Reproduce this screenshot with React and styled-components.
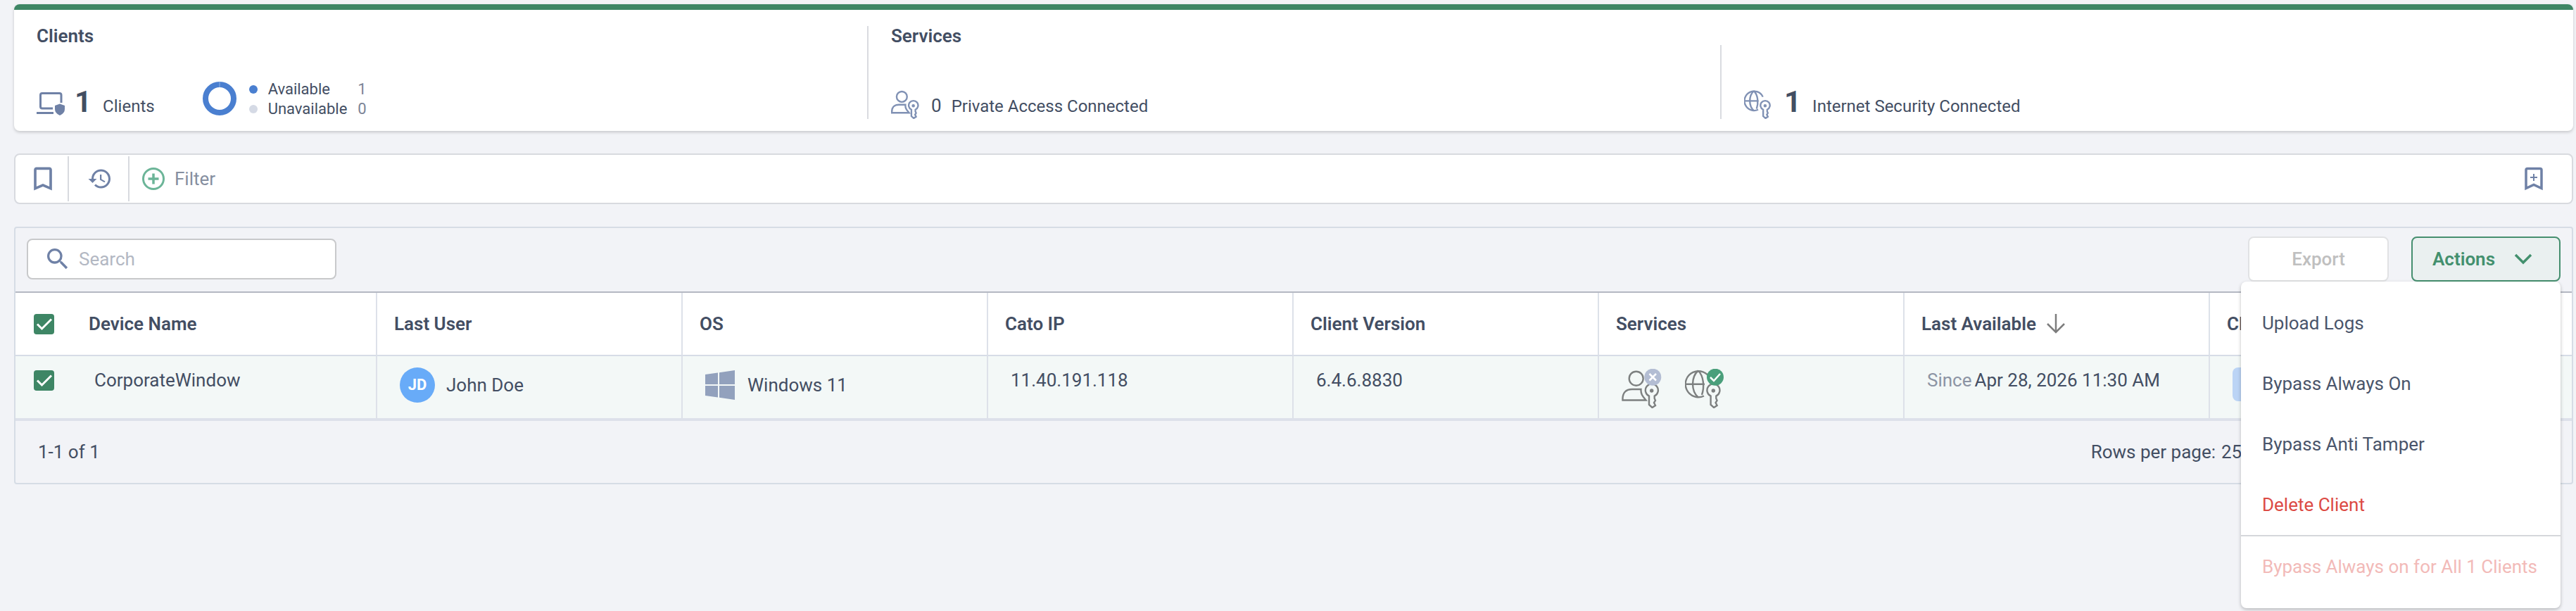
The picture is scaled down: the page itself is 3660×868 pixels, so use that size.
import React from "react"
import styled, { createGlobalStyle } from "styled-components"
import { MdBookmarkBorder, MdHistory, MdSearch } from "react-icons/md"

const GlobalStyle = createGlobalStyle`
	* {
		box-sizing: border-box;
	}

	body {
		margin: 0;
		background: #f2f3f7;
		color: #434e63;
		font-family: Roboto, "Liberation Sans", sans-serif;
		font-size: 26px;
		line-height: 32px;
	}

	button, input, select {
		font: inherit;
		color: inherit;
	}
`

const Page = styled.main`
	display: flex;
	flex-direction: column;
	gap: 32px;
	min-height: 100vh;
	padding: 6px 4px 4px 20px;
`

const Summary = styled.section`
	display: grid;
	grid-template-columns: repeat(3, 1fr);
	padding: 23px 0 17px;
	background: #fff;
	border-top: 8px solid #3e8665;
	border-radius: 8px;
	box-shadow: 0 2px 4px rgba(0, 0, 0, 0.18);
`

const SummaryColumn = styled.div`
	display: flex;
	flex-direction: column;
	justify-content: space-between;
	min-height: ${props => props.$short ? "105px" : "132px"};
	align-self: end;
	padding-left: 32px;
	border-left: ${props => props.$divided ? "2px solid #d9dbe0" : "none"};
`

const Title = styled.h2`
	margin: 0;
	font-size: 26px;
	font-weight: 600;
	line-height: 28px;
`

const StatRow = styled.div`
	display: flex;
	align-items: flex-end;
	margin-top: auto;

	svg {
		display: block;
		flex: none;
	}
`

const Figures = styled.div`
	margin-left: 14px;
	font-size: 42px;
	line-height: 48px;
	white-space: nowrap;

	span {
		line-height: 24px;
	}
`

const Count = styled.span`
	font-size: ${props => props.$big ? "42px" : "26px"};
	font-weight: ${props => props.$big ? 700 : 400};
`

const CountLabel = styled.span`
	margin-left: ${props => props.$wide ? "16px" : "14px"};
	font-size: 24px;
`

const Availability = styled.div`
	display: flex;
	align-items: flex-end;
	gap: 18px;
	margin-left: 68px;
`

const Legend = styled.dl`
	display: grid;
	grid-template-columns: 12px auto auto;
	column-gap: 15px;
	align-items: center;
	margin: 0;
	font-size: 22px;
	line-height: 28px;

	dd {
		margin: 0;
		color: #7b8496;
	}
`

const Dot = styled.span`
	width: 12px;
	height: 12px;
	border-radius: 50%;
	background: ${props => props.color};
`

const FilterBar = styled.div`
	display: flex;
	height: 72px;
	padding: 2px 0;
	background: #fff;
	border: 2px solid #d8dadf;
	border-radius: 8px;
`

const IconButton = styled.button`
	display: flex;
	align-items: center;
	justify-content: center;
	width: ${props => props.$width};
	padding: 0 0 0 4px;
	margin-left: ${props => props.$end ? "auto" : "0"};
	background: none;
	border: none;
	border-right: ${props => props.$end ? "none" : "2px solid #d8dadf"};
	color: #6f81a6;
`

const AddFilter = styled.button`
	display: flex;
	align-items: center;
	gap: 14px;
	padding: 0 18px;
	background: none;
	border: none;
	color: #868fa0;
`

const Panel = styled.section`
	border: 2px solid #d6dce5;
	border-radius: 4px;
`

const Toolbar = styled.div`
	display: flex;
	align-items: center;
	gap: 32px;
	height: 92px;
	padding: 0 16px 2px;
	border-bottom: 2px solid #b4b8c2;
`

const SearchBox = styled.label`
	display: flex;
	align-items: center;
	gap: 10px;
	width: 440px;
	height: 58px;
	margin-right: auto;
	padding: 0 22px;
	background: #fff;
	border: 2px solid #c8c9cb;
	border-radius: 8px;
	color: #6f81a6;

	input {
		flex: 1;
		min-width: 0;
		padding: 0;
		background: none;
		border: none;
		outline: none;
	}

	input::placeholder {
		color: #b3b8c3;
		opacity: 1;
	}
`

const ExportButton = styled.button`
	width: 200px;
	height: 64px;
	background: #fff;
	border: 2px solid #e1e2e4;
	border-radius: 8px;
	color: #bfbfbf;
	font-weight: 500;
`

const ActionsWrap = styled.div`
	position: relative;
`

const ActionsButton = styled.button`
	display: flex;
	align-items: center;
	justify-content: space-between;
	width: 212px;
	height: 64px;
	padding: 0 38px 0 28px;
	background: #eaf0f0;
	border: 2px solid #468f6f;
	border-radius: 8px;
	color: #43906e;
	font-weight: 600;
`

const Menu = styled.div`
	position: absolute;
	top: 100%;
	right: 0;
	z-index: 1;
	width: 454px;
	padding: 16px 0;
	background: #fff;
	border-radius: 8px;
	box-shadow: 0 2px 5px rgba(0, 0, 0, 0.25);
`

const MenuItem = styled.button`
	display: block;
	width: 100%;
	height: ${props => props.$separated ? "88px" : "86px"};
	padding: 0 30px;
	background: none;
	border: none;
	border-top: ${props => props.$separated ? "2px solid #d5d7db" : "none"};
	color: ${props => props.$color || "#4a556b"};
	text-align: left;
	white-space: nowrap;
`

const Table = styled.table`
	width: 100%;
	table-layout: fixed;
	border-collapse: separate;
	border-spacing: 0;

	.edge {
		width: 80px;
	}

	th, td {
		padding: 0 24px;
		border-right: 2px solid #dde1e9;
		text-align: left;
		white-space: nowrap;
	}

	th {
		height: 90px;
		background: #fff;
		border-bottom: 2px solid #d6dce6;
		font-weight: 600;
	}

	td {
		height: 92px;
		padding: 16px 32px 0;
		background: #f3f8f7;
		border-bottom: 4px solid #dde1ea;
		vertical-align: top;
	}

	th:first-child, td:first-child {
		padding-left: 26px;
		padding-right: 0;
	}

	th:first-child, td:first-child, th:last-child, td:last-child {
		border-right: none;
	}
`

const Checkbox = styled.input.attrs({ type: "checkbox" })`
	appearance: none;
	display: block;
	width: 29px;
	height: 29px;
	margin: ${props => props.$row ? "4px 0 0" : "0"};
	border: 2px solid #8b95a8;
	border-radius: 4px;

	&:checked {
		border: none;
		background: #3e8665 url("data:image/svg+xml,%3Csvg xmlns='http://www.w3.org/2000/svg' viewBox='0 0 29 29'%3E%3Cpath d='M5 14.500l6.500 6.500L25 7.500' fill='none' stroke='white' stroke-width='3'/%3E%3C/svg%3E");
	}
`

const CellText = styled.div`
	line-height: 36px;
`

const Muted = styled.span`
	margin-right: 4px;
	color: #8c94a4;
`

const CellGroup = styled.div`
	display: flex;
	align-items: center;
	gap: ${props => props.$gap || "16px"};
	height: ${props => props.$tall ? "60px" : "50px"};
`

const Avatar = styled.span`
	display: flex;
	align-items: center;
	justify-content: center;
	width: 50px;
	height: 50px;
	border-radius: 50%;
	background: #68abf8;
	color: #fff;
	font-size: 22px;
	font-weight: 700;
`

const Chip = styled.div`
	width: 160px;
	height: 48px;
	border-radius: 8px;
	background: #bbd4f5;
`

const SortLabel = styled.span`
	display: flex;
	align-items: center;
	gap: 14px;
`

const Footer = styled.div`
	display: flex;
	align-items: center;
	justify-content: space-between;
	height: 88px;
	padding: 0 398px 0 32px;
`

const RowsPerPage = styled.label`
	display: flex;
	align-items: center;
	gap: 8px;

	select {
		appearance: none;
		width: 100px;
		padding: 0;
		background: none;
		border: none;
	}
`

const Key = ({ dx = 0 }) => (
	<g transform={`translate(${dx} 0)`}>
		<path d="M41 38.500A9 9 0 1 1 48.700 38.500V42L50 45L48 48L50 52L45.500 55L41 51Z" />
		<circle cx="44.700" cy="31" r="1.500" fill="currentColor" />
	</g>
)

const CheckBadge = () => (
	<g stroke="none">
		<circle cx="45" cy="11.700" r="12" fill="#4a9f7b" />
		<path d="M38 12l5 5l9-10" stroke="#fff" strokeWidth="2.500" />
	</g>
)

const CrossBadge = () => (
	<g stroke="none">
		<circle cx="46.300" cy="11.700" r="12" fill="#b3bdd3" />
		<path d="M41.500 7l9.500 9.500M51 7l-9.500 9.500" stroke="#fff" strokeWidth="2.500" />
	</g>
)

const ServiceSvg = ({ small, children }) => (
	<svg
		width={small ? 43 : 58}
		height={small ? 42 : 56}
		viewBox="2 0 58 56"
		fill="none"
		stroke="currentColor"
		strokeWidth={small ? 3.2 : 2.4}
		color={small ? "#8091b4" : "#7d8080"}
		aria-hidden="true"
	>
		{children}
	</svg>
)

const PrivateAccessIcon = ({ small }) => (
	<ServiceSvg small={small}>
		<circle cx="22.700" cy="13.700" r="10" />
		<path d="M3.500 44.500C3 34 8 29 17 29H29.500C29 36 32 39 36.500 44.500Z" />
		<Key />
		{!small && <CrossBadge />}
	</ServiceSvg>
)

const InternetSecurityIcon = ({ small }) => (
	<ServiceSvg small={small}>
		<path d="M38 14A18.500 18.500 0 1 0 29 38.500" />
		<path d="M20.700 2.500C10.500 12 10.500 31 20.700 40.500M20.700 2.500C28.500 10 30 25 26 37M2 21.700H30" />
		<Key dx={-2.4} />
		{!small && <CheckBadge />}
	</ServiceSvg>
)

const LaptopIcon = () => (
	<svg width="40" height="40" viewBox="0 0 40 40" fill="none" stroke="#6f81a6" strokeWidth="3" aria-hidden="true">
		<path d="M35 17V6Q35 3.500 32.500 3.500H8Q5.500 3.500 5.500 6V22.500Q5.500 25 8 25H23M0 31.500H24" />
		<path d="M33 18.500l7 2.500v5q0 6-7 9q-7-3-7-9v-5z" fill="#6f81a6" stroke="none" />
	</svg>
)

const Donut = () => (
	<svg width="48" height="53" viewBox="0 0 48 53" fill="none" aria-hidden="true">
		<circle cx="24" cy="24" r="20" stroke="#4a7fd0" strokeWidth="8" />
		<path d="M24 0v8" stroke="#8fb1e4" strokeWidth="1" />
	</svg>
)

const PlusCircle = () => (
	<svg width="32" height="32" viewBox="0 0 32 32" fill="none" stroke="#6cb598" strokeWidth="3" aria-hidden="true">
		<circle cx="16" cy="16" r="14.500" />
		<path d="M16 8.500v15M8.500 16h15" strokeWidth="3.500" />
	</svg>
)

const BookmarkPlus = () => (
	<svg width="26" height="34" viewBox="0 0 26 34" fill="none" stroke="currentColor" strokeWidth="3.500" aria-hidden="true">
		<path d="M2 30.500V4.500Q2 2.500 4 2.500H22Q24 2.500 24 4.500V30.500L13 25.500Z" />
		<path d="M13 10v10M8 15h10" strokeWidth="2" />
	</svg>
)

const Chevron = () => (
	<svg width="26" height="16" viewBox="0 0 26 16" fill="none" stroke="currentColor" strokeWidth="3.500" aria-hidden="true">
		<path d="M2 2l11 11L24 2" />
	</svg>
)

const SortArrow = () => (
	<svg width="28" height="28" viewBox="0 0 28 28" fill="none" stroke="#7d7d7d" strokeWidth="2.500" aria-hidden="true">
		<path d="M14 0v25M2 14l12 12l12-12" />
	</svg>
)

const WindowsLogo = () => (
	<svg width="42" height="42" viewBox="0 0 42 42" fill="#92a1bd" aria-hidden="true">
		<path d="M0 6l18-2.500V20H0zM20 3.200L42 0v20H20zM0 22h18v16.500L0 36zM20 22h22v20l-22-3.200z" />
	</svg>
)

const columns = ["Device Name", "Last User", "OS", "Cato IP", "Client Version", "Services"]

const actions = [
	{ label: "Upload Logs" },
	{ label: "Bypass Always On" },
	{ label: "Bypass Anti Tamper" },
	{ label: "Delete Client", color: "#dc4a44" },
	{ label: "Bypass Always on for All 1 Clients", color: "#f2bab8", separated: true, disabled: true },
]

const ClientSummary = () => (
	<Summary>
		<SummaryColumn>
			<Title>Clients</Title>
			<StatRow>
				<LaptopIcon />
				<Figures>
					<Count $big>1</Count>
					<CountLabel $wide>Clients</CountLabel>
				</Figures>
				<Availability>
					<Donut />
					<Legend>
						<Dot color="#4a7fd0" />
						<dt>Available</dt>
						<dd>1</dd>
						<Dot color="#d5dae5" />
						<dt>Unavailable</dt>
						<dd>0</dd>
					</Legend>
				</Availability>
			</StatRow>
		</SummaryColumn>
		<SummaryColumn $divided>
			<Title>Services</Title>
			<StatRow>
				<PrivateAccessIcon small />
				<Figures>
					<Count>0</Count>
					<CountLabel>Private Access Connected</CountLabel>
				</Figures>
			</StatRow>
		</SummaryColumn>
		<SummaryColumn $divided $short>
			<StatRow>
				<InternetSecurityIcon small />
				<Figures>
					<Count $big>1</Count>
					<CountLabel $wide>Internet Security Connected</CountLabel>
				</Figures>
			</StatRow>
		</SummaryColumn>
	</Summary>
)

const Filters = () => (
	<FilterBar>
		<IconButton $width="76px" aria-label="Saved filters"><MdBookmarkBorder size={44} /></IconButton>
		<IconButton $width="86px" aria-label="Filter history"><MdHistory size={36} /></IconButton>
		<AddFilter><PlusCircle />Filter</AddFilter>
		<IconButton $width="112px" $end aria-label="Save filter"><BookmarkPlus /></IconButton>
	</FilterBar>
)

const TableToolbar = () => (
	<Toolbar>
		<SearchBox>
			<MdSearch size={40} />
			<input type="text" placeholder="Search" aria-label="Search" />
		</SearchBox>
		<ExportButton disabled>Export</ExportButton>
		<ActionsWrap>
			<ActionsButton aria-expanded="true">Actions<Chevron /></ActionsButton>
			<Menu>
				{actions.map(action => (
					<MenuItem
						key={action.label}
						$color={action.color}
						$separated={action.separated}
						disabled={action.disabled}
					>
						{action.label}
					</MenuItem>
				))}
			</Menu>
		</ActionsWrap>
	</Toolbar>
)

const ClientsTable = () => (
	<Table>
		<thead>
			<tr>
				<th className="edge"><Checkbox defaultChecked aria-label="Select all clients" /></th>
				{columns.map(name => <th key={name}>{name}</th>)}
				<th><SortLabel>Last Available<SortArrow /></SortLabel></th>
				<th>Cl</th>
				<th className="edge"></th>
			</tr>
		</thead>
		<tbody>
			<tr>
				<td><Checkbox $row defaultChecked aria-label="Select CorporateWindow" /></td>
				<td><CellText>CorporateWindow</CellText></td>
				<td><CellGroup><Avatar>JD</Avatar>John Doe</CellGroup></td>
				<td><CellGroup $gap="18px"><WindowsLogo />Windows 11</CellGroup></td>
				<td><CellText>11.40.191.118</CellText></td>
				<td><CellText>6.4.6.8830</CellText></td>
				<td><CellGroup $tall $gap="32px"><PrivateAccessIcon /><InternetSecurityIcon /></CellGroup></td>
				<td><CellText><Muted>Since</Muted>Apr 28, 2026 11:30 AM</CellText></td>
				<td><Chip /></td>
				<td></td>
			</tr>
		</tbody>
	</Table>
)

class App extends React.Component {
	render() {
		return (
			<>
				<GlobalStyle />
				<Page>
					<ClientSummary />
					<Filters />
					<Panel>
						<TableToolbar />
						<ClientsTable />
						<Footer>
							<span>1-1 of 1</span>
							<RowsPerPage>
								Rows per page:
								<select defaultValue="25">
									<option>25</option>
									<option>50</option>
								</select>
							</RowsPerPage>
						</Footer>
					</Panel>
				</Page>
			</>
		)
	}
}

export default App
